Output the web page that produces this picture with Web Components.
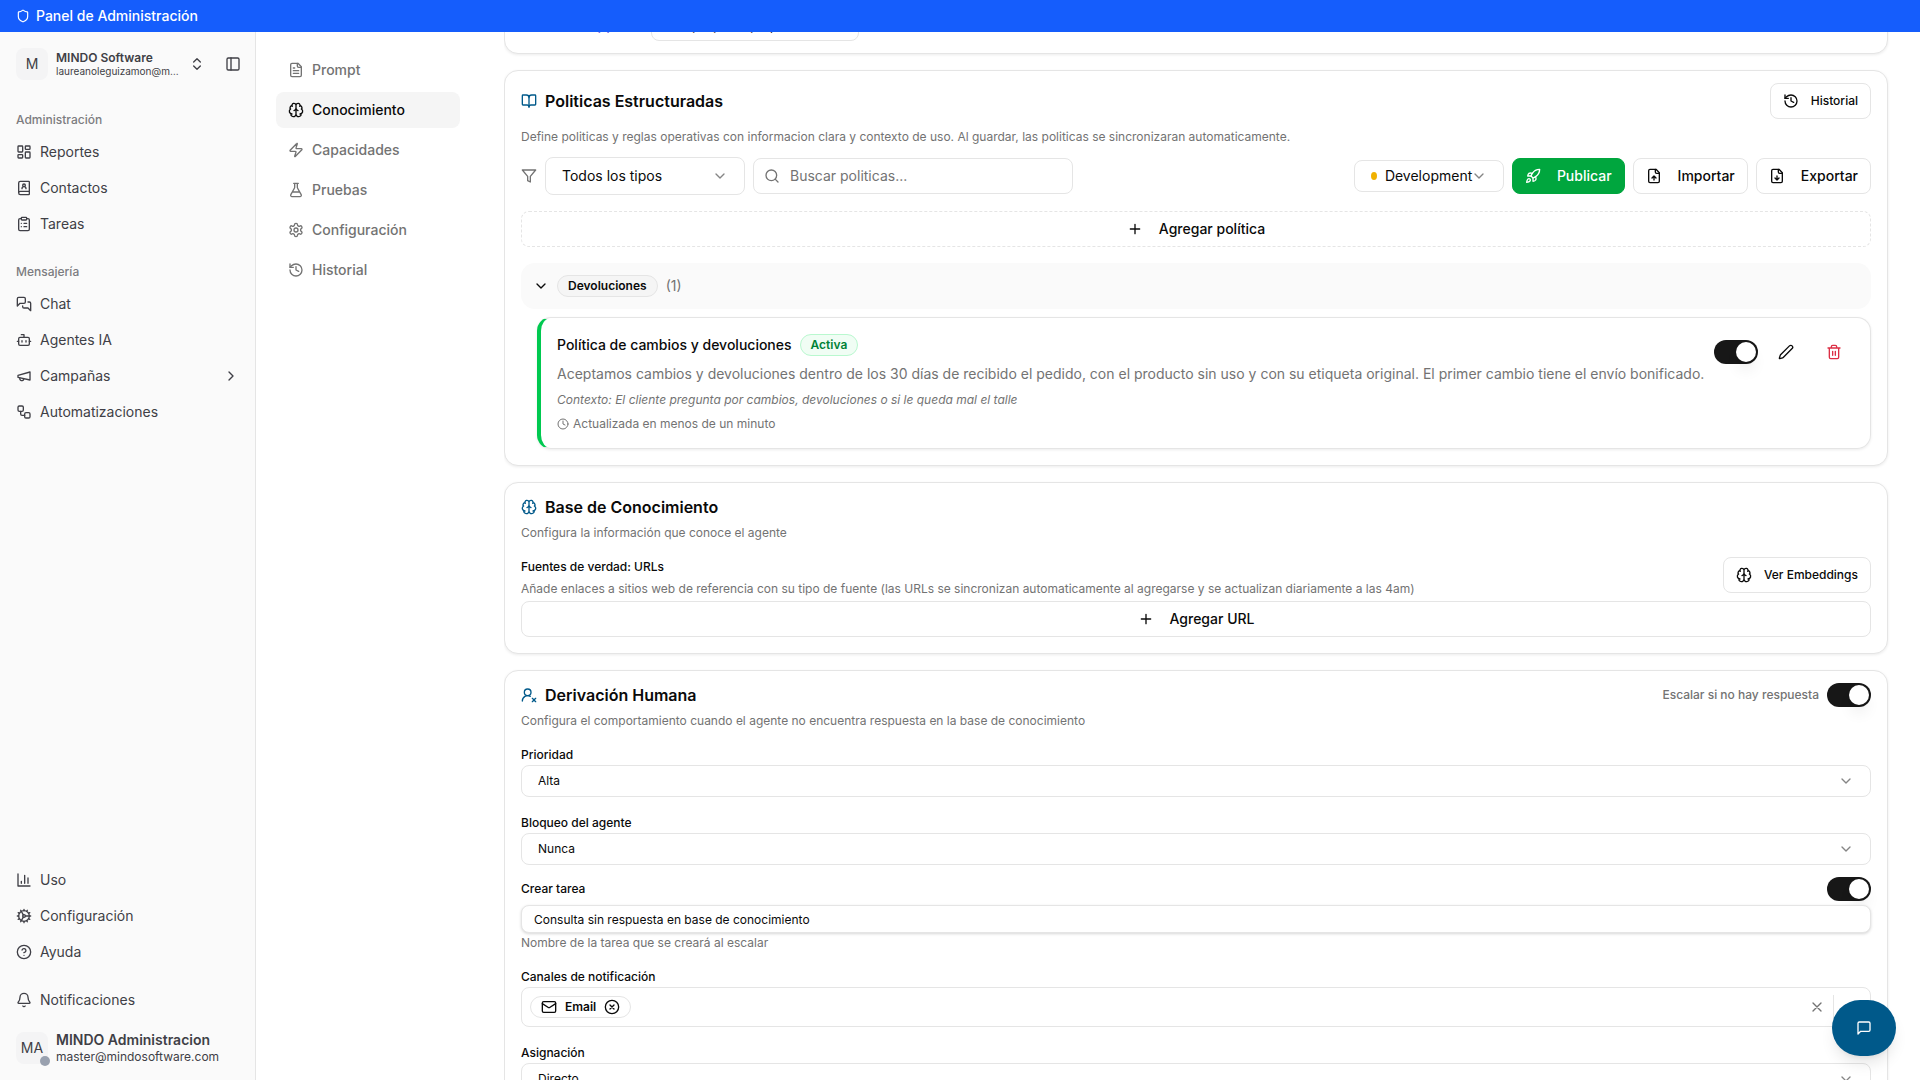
<!DOCTYPE html>
<html lang="es">
<head>
<meta charset="utf-8">
<meta name="viewport" content="width=device-width, initial-scale=1">
<title>Panel de Administración</title>
<style>
    :root {
        --blue: #155dfc;
        --brand: #00598a;
        --green: #00a63e;
        --text: #0a0a0a;
        --muted: #737373;
        --border: #e5e5e5;
        --side-text: #3f3f46;
    }
    body {
        margin: 0;
        font-family: Inter, "Liberation Sans", sans-serif;
        font-size: 14px;
        line-height: 20px;
        color: var(--text);
        background: #fff;
    }
</style>
</head>
<body>
<admin-app></admin-app>

<script>
// Icon shapes on a 24px grid
const icons = {
    'shield': '<path d="M20 13c0 5-3.5 7.5-7.66 8.95a1 1 0 0 1-.67-.01C7.5 20.5 4 18 4 13V6a1 1 0 0 1 1-1c2 0 4.5-1.2 6.24-2.72a1.17 1.17 0 0 1 1.52 0C14.51 3.81 17 5 19 5a1 1 0 0 1 1 1z"/>',
    'chevrons': '<path d="m7 15 5 5 5-5M7 9l5-5 5 5"/>',
    'chevron-down': '<path d="m6 9 6 6 6-6"/>',
    'chevron-right': '<path d="m9 18 6-6-6-6"/>',
    'panel-left': '<rect width="18" height="18" x="3" y="3" rx="2"/><path d="M9 3v18"/>',
    'dashboard': '<rect width="7" height="9" x="3" y="3" rx="1"/><rect width="7" height="5" x="14" y="3" rx="1"/><rect width="7" height="9" x="14" y="12" rx="1"/><rect width="7" height="5" x="3" y="16" rx="1"/>',
    'grid': '<rect width="7" height="7" x="3" y="3" rx="1"/><rect width="7" height="7" x="14" y="3" rx="1"/><rect width="7" height="7" x="14" y="14" rx="1"/><rect width="7" height="7" x="3" y="14" rx="1"/>',
    'book-user': '<path d="M15 13a3 3 0 1 0-6 0"/><path d="M4 19.5v-15A2.5 2.5 0 0 1 6.5 2H19a1 1 0 0 1 1 1v18a1 1 0 0 1-1 1H6.5a1 1 0 0 1 0-5H20"/><circle cx="12" cy="8" r="2"/>',
    'clipboard': '<rect width="8" height="4" x="8" y="2" rx="1"/><path d="M16 4h2a2 2 0 0 1 2 2v14a2 2 0 0 1-2 2H6a2 2 0 0 1-2-2V6a2 2 0 0 1 2-2h2M12 11h4M12 16h4M8 11h.01M8 16h.01"/>',
    'messages': '<path d="M14 9a2 2 0 0 1-2 2H6l-4 4V4a2 2 0 0 1 2-2h8a2 2 0 0 1 2 2z"/><path d="M18 9h2a2 2 0 0 1 2 2v11l-4-4h-6a2 2 0 0 1-2-2v-1"/>',
    'bot': '<path d="M12 8V4H8"/><rect width="16" height="12" x="4" y="8" rx="2"/><path d="M2 14h2M20 14h2M15 13v2M9 13v2"/>',
    'megaphone': '<path d="m3 11 18-5v12L3 14v-3z"/><path d="M11.6 16.8a3 3 0 1 1-5.8-1.6"/>',
    'workflow': '<rect width="8" height="8" x="3" y="3" rx="2"/><path d="M7 11v4a2 2 0 0 0 2 2h4"/><rect width="8" height="8" x="13" y="13" rx="2"/>',
    'chart': '<path d="M3 3v18h18M18 17V9M13 17V5M8 17v-3"/>',
    'cog': '<path d="M12 20a8 8 0 1 0 0-16 8 8 0 0 0 0 16Z"/><path d="M12 14a2 2 0 1 0 0-4 2 2 0 0 0 0 4Z"/><path d="M12 2v2M12 22v-2M17 20.66l-1-1.73M11 10.27 7 3.34M20.66 17l-1.73-1M3.34 7l1.73 1M14 12h8M2 12h2M20.66 7l-1.73 1M3.34 17l1.73-1M17 3.34l-1 1.73M11 13.73l-4 6.93"/>',
    'help': '<circle cx="12" cy="12" r="10"/><path d="M9.09 9a3 3 0 0 1 5.83 1c0 2-3 3-3 3M12 17h.01"/>',
    'bell': '<path d="M10.268 21a2 2 0 0 0 3.464 0"/><path d="M3.262 15.326A1 1 0 0 0 4 17h16a1 1 0 0 0 .74-1.673C19.41 13.956 18 12.499 18 8A6 6 0 0 0 6 8c0 4.499-1.411 5.956-2.738 7.326"/>',
    'file-text': '<path d="M15 2H6a2 2 0 0 0-2 2v16a2 2 0 0 0 2 2h12a2 2 0 0 0 2-2V7Z"/><path d="M14 2v4a2 2 0 0 0 2 2h4M10 9H8M16 13H8M16 17H8"/>',
    'brain': '<path d="M12 18V5M15 13a4.17 4.17 0 0 1-3-4 4.17 4.17 0 0 1-3 4M17.598 6.5A3 3 0 1 0 12 5a3 3 0 1 0-5.598 1.5M17.997 5.125a4 4 0 0 1 2.526 5.77M18 18a4 4 0 0 0 2-7.464M19.967 17.483A4 4 0 1 1 12 18a4 4 0 1 1-7.967-.517M6 18a4 4 0 0 1-2-7.464M6.003 5.125a4 4 0 0 0-2.526 5.77"/>',
    'zap': '<path d="M4 14a1 1 0 0 1-.78-1.63l9.9-10.2a.5.5 0 0 1 .86.46l-1.92 6.02A1 1 0 0 0 13 10h7a1 1 0 0 1 .78 1.63l-9.9 10.2a.5.5 0 0 1-.86-.46l1.92-6.02A1 1 0 0 0 11 14z"/>',
    'flask': '<path d="M14 2v6a2 2 0 0 0 .245.96l5.51 10.08A2 2 0 0 1 18 22H6a2 2 0 0 1-1.755-2.96l5.51-10.08A2 2 0 0 0 10 8V2M6.453 15h11.094M8.5 2h7"/>',
    'settings': '<path d="M12.22 2h-.44a2 2 0 0 0-2 2v.18a2 2 0 0 1-1 1.73l-.43.25a2 2 0 0 1-2 0l-.15-.08a2 2 0 0 0-2.73.73l-.22.38a2 2 0 0 0 .73 2.73l.15.1a2 2 0 0 1 1 1.72v.51a2 2 0 0 1-1 1.74l-.15.09a2 2 0 0 0-.73 2.73l.22.38a2 2 0 0 0 2.73.73l.15-.08a2 2 0 0 1 2 0l.43.25a2 2 0 0 1 1 1.73V20a2 2 0 0 0 2 2h.44a2 2 0 0 0 2-2v-.18a2 2 0 0 1 1-1.73l.43-.25a2 2 0 0 1 2 0l.15.08a2 2 0 0 0 2.73-.73l.22-.39a2 2 0 0 0-.73-2.73l-.15-.08a2 2 0 0 1-1-1.74v-.5a2 2 0 0 1 1-1.74l.15-.09a2 2 0 0 0 .73-2.73l-.22-.38a2 2 0 0 0-2.73-.73l-.15.08a2 2 0 0 1-2 0l-.43-.25a2 2 0 0 1-1-1.73V4a2 2 0 0 0-2-2z"/><circle cx="12" cy="12" r="3"/>',
    'history': '<path d="M3 12a9 9 0 1 0 9-9 9.75 9.75 0 0 0-6.74 2.74L3 8"/><path d="M3 3v5h5M12 7v5l4 2"/>',
    'book-open': '<path d="M12 7v14"/><path d="M3 18a1 1 0 0 1-1-1V4a1 1 0 0 1 1-1h5a4 4 0 0 1 4 4 4 4 0 0 1 4-4h5a1 1 0 0 1 1 1v13a1 1 0 0 1-1 1h-6a3 3 0 0 0-3 3 3 3 0 0 0-3-3z"/>',
    'filter': '<path d="M22 3H2l8 9.46V19l4 2v-8.54z"/>',
    'search': '<circle cx="11" cy="11" r="8"/><path d="m21 21-4.3-4.3"/>',
    'rocket': '<path d="M4.5 16.5c-1.5 1.26-2 5-2 5s3.74-.5 5-2c.71-.84.7-2.13-.09-2.91a2.18 2.18 0 0 0-2.91-.09z"/><path d="m12 15-3-3a22 22 0 0 1 2-3.95A12.88 12.88 0 0 1 22 2c0 2.72-.78 7.5-6 11a22.35 22.35 0 0 1-4 2z"/><path d="M9 12H4s.55-3.03 2-4c1.62-1.08 5 0 5 0M12 15v5s3.03-.55 4-2c1.08-1.62 0-5 0-5"/>',
    'file-up': '<path d="M15 2H6a2 2 0 0 0-2 2v16a2 2 0 0 0 2 2h12a2 2 0 0 0 2-2V7Z"/><path d="M14 2v4a2 2 0 0 0 2 2h4M12 12v6M15 15l-3-3-3 3"/>',
    'file-down': '<path d="M15 2H6a2 2 0 0 0-2 2v16a2 2 0 0 0 2 2h12a2 2 0 0 0 2-2V7Z"/><path d="M14 2v4a2 2 0 0 0 2 2h4M12 18v-6M9 15l3 3 3-3"/>',
    'pencil': '<path d="M21.174 6.812a1 1 0 0 0-3.986-3.987L3.842 16.174a2 2 0 0 0-.5.83l-1.321 4.352a.5.5 0 0 0 .623.622l4.353-1.32a2 2 0 0 0 .83-.497z"/>',
    'trash': '<path d="M3 6h18M19 6v14c0 1-1 2-2 2H7c-1 0-2-1-2-2V6M8 6V4c0-1 1-2 2-2h4c1 0 2 1 2 2v2M10 11v6M14 11v6"/>',
    'user-x': '<path d="M2 21a8 8 0 0 1 11.873-7"/><circle cx="10" cy="8" r="5"/><path d="m17 17 5 5M22 17l-5 5"/>',
    'mail': '<rect width="20" height="16" x="2" y="4" rx="2"/><path d="m22 7-8.97 5.7a1.94 1.94 0 0 1-2.06 0L2 7"/>',
    'circle-x': '<circle cx="12" cy="12" r="10"/><path d="m15 9-6 6M9 9l6 6"/>',
    'x': '<path d="M18 6 6 18M6 6l12 12"/>',
    'plus': '<path d="M5 12h14M12 5v14"/>',
    'clock': '<circle cx="12" cy="12" r="10"/><path d="M12 6v6l4 2"/>',
    'message': '<path d="M21 15a2 2 0 0 1-2 2H7l-4 4V5a2 2 0 0 1 2-2h14a2 2 0 0 1 2 2z"/>'
};

class UiIcon extends HTMLElement {
    constructor() {
        super();
        this.attachShadow({ mode: 'open' });
    }

    connectedCallback() {
        this.shadowRoot.innerHTML = `
            <style>
                :host {
                    display: block;
                    flex: none;
                    width: 16px;
                    height: 16px;
                }
                svg {
                    display: block;
                    width: 100%;
                    height: 100%;
                    fill: none;
                    stroke: currentColor;
                    stroke-width: 2;
                    stroke-linecap: round;
                    stroke-linejoin: round;
                }
            </style>
            <svg viewBox="0 0 24 24" aria-hidden="true">${icons[this.getAttribute('name')]}</svg>
        `;
    }
}

class UiButton extends HTMLElement {
    constructor() {
        super();
        this.attachShadow({ mode: 'open' });
    }

    connectedCallback() {
        this.shadowRoot.innerHTML = `
            <style>
                :host {
                    display: block;
                }
                button {
                    display: flex;
                    align-items: center;
                    justify-content: center;
                    gap: 16px;
                    width: 100%;
                    height: 36px;
                    padding: 0 12px;
                    border: 1px solid var(--border);
                    border-radius: 8px;
                    background: #fff;
                    color: var(--text);
                    font: 500 14px/20px Inter, "Liberation Sans", sans-serif;
                    white-space: nowrap;
                    cursor: pointer;
                }
                :host([size="sm"]) button {
                    gap: 12px;
                    font-size: 12px;
                }
                :host([variant="dashed"]) button {
                    border-style: dashed;
                }
                :host([variant="primary"]) button {
                    background: var(--green);
                    border-color: var(--green);
                    color: #fff;
                }
            </style>
            <button type="button"><ui-icon name="${this.getAttribute('icon')}"></ui-icon><slot></slot></button>
        `;
    }
}

class UiSwitch extends HTMLElement {
    constructor() {
        super();
        this.attachShadow({ mode: 'open' });
    }

    connectedCallback() {
        this.shadowRoot.innerHTML = `
            <style>
                :host {
                    display: block;
                }
                label {
                    display: flex;
                    align-items: center;
                    justify-content: space-between;
                    gap: 8px;
                    font-size: 12px;
                    font-weight: 500;
                }
                :host([muted]) label {
                    color: var(--muted);
                }
                input {
                    appearance: none;
                    display: flex;
                    align-items: center;
                    justify-content: flex-end;
                    box-sizing: border-box;
                    width: 44px;
                    height: 24px;
                    margin: 0;
                    padding: 2px;
                    border-radius: 12px;
                    background: #171717;
                    cursor: pointer;
                }
                input::before {
                    content: "";
                    width: 20px;
                    height: 20px;
                    border-radius: 50%;
                    background: #fff;
                    box-shadow: 0 10px 15px -3px rgba(0,0,0,0.1), 0 4px 6px -4px rgba(0,0,0,0.1);
                }
                input:not(:checked) {
                    justify-content: flex-start;
                    background: var(--border);
                }
            </style>
            <label><slot></slot><input type="checkbox" role="switch" checked aria-label="${this.getAttribute('label') || this.textContent}"></label>
        `;
    }
}

class UiSelect extends HTMLElement {
    constructor() {
        super();
        this.attachShadow({ mode: 'open' });
    }

    connectedCallback() {
        const label = this.getAttribute('label');
        const dot = this.hasAttribute('dot') ? '<span class="dot"></span>' : '';

        this.shadowRoot.innerHTML = `
            <style>
                :host {
                    display: block;
                    --height: 32px;
                    --size: 12px;
                }
                label {
                    display: block;
                    font-size: 12px;
                    font-weight: 500;
                }
                .box {
                    display: grid;
                    grid-template-columns: 16px auto 1fr auto 16px;
                    align-items: center;
                    box-sizing: border-box;
                    height: var(--height);
                    border: 1px solid var(--border);
                    border-radius: 8px;
                }
                select {
                    appearance: none;
                    grid-column: 1 / -1;
                    grid-row: 1;
                    width: 100%;
                    height: 100%;
                    padding: 0 16px;
                    border: 0;
                    background: transparent;
                    color: var(--text);
                    font: 400 var(--size)/20px Inter, "Liberation Sans", sans-serif;
                }
                .dot {
                    grid-column: 2;
                    grid-row: 1;
                    width: 6px;
                    height: 8px;
                    border-radius: 50%;
                    background: #f0b100;
                }
                .dot ~ select {
                    padding-left: 30px;
                }
                ui-icon {
                    grid-column: 4;
                    grid-row: 1;
                    color: #858585;
                    pointer-events: none;
                }
            </style>
            ${label ? `<label for="field">${label}</label>` : ''}
            <div class="box">
                ${dot}
                <select id="field" aria-label="${label || this.getAttribute('value')}"><option>${this.getAttribute('value')}</option></select>
                <ui-icon name="chevron-down"></ui-icon>
            </div>
        `;
    }
}

class UiBadge extends HTMLElement {
    constructor() {
        super();
        this.attachShadow({ mode: 'open' });
        this.shadowRoot.innerHTML = `
            <style>
                :host {
                    display: flex;
                    align-items: center;
                    gap: 8px;
                    box-sizing: border-box;
                    height: 22px;
                    padding: 0 10px;
                    border: 1px solid var(--border);
                    border-radius: 11px;
                    background: #f5f5f5;
                    font-size: 12px;
                    font-weight: 600;
                    line-height: 16px;
                }
                :host([tone="active"]) {
                    color: #008236;
                    background: #f0fdf4;
                    border-color: #b9f8cf;
                }
                :host([tone="plain"]) {
                    background: #fff;
                }
            </style>
            <slot></slot>
        `;
    }
}

class UiCard extends HTMLElement {
    constructor() {
        super();
        this.attachShadow({ mode: 'open' });
    }

    connectedCallback() {
        const heading = this.getAttribute('heading');

        this.shadowRoot.innerHTML = `
            <style>
                :host {
                    display: block;
                    padding: 12px 16px 16px;
                    border: 1px solid var(--border);
                    border-radius: 14px;
                    background: #fff;
                    box-shadow: 0 1px 3px rgba(0,0,0,0.08);
                }
                :host([compact]) {
                    padding-bottom: 12px;
                }
                header {
                    display: flex;
                    align-items: center;
                    justify-content: space-between;
                }
                h2 {
                    display: flex;
                    align-items: center;
                    gap: 8px;
                    margin: 0;
                    font-size: 16px;
                    font-weight: 600;
                    line-height: 24px;
                }
                h2 ui-icon {
                    color: var(--brand);
                }
                p {
                    margin: 6px 0 0;
                    color: var(--muted);
                    font-size: 12px;
                    line-height: 16px;
                }
                :host([roomy]) p {
                    margin-top: 10px;
                }
            </style>
            ${heading ? `
                <header>
                    <h2><ui-icon name="${this.getAttribute('icon')}"></ui-icon>${heading}</h2>
                    <slot name="action"></slot>
                </header>
                <p>${this.getAttribute('description')}</p>
            ` : ''}
            <slot></slot>
        `;
    }
}

class AppSidebar extends HTMLElement {
    constructor() {
        super();
        this.attachShadow({ mode: 'open' });
    }

    connectedCallback() {
        const link = ([icon, text, more]) => `
            <a href="#"><ui-icon name="${icon}"></ui-icon><span>${text}</span>${more ? '<ui-icon name="chevron-right"></ui-icon>' : ''}</a>
        `;
        const admin = [['dashboard', 'Reportes'], ['book-user', 'Contactos'], ['clipboard', 'Tareas']];
        const messaging = [['messages', 'Chat'], ['bot', 'Agentes IA'], ['megaphone', 'Campañas', true], ['workflow', 'Automatizaciones']];
        const support = [['chart', 'Uso'], ['cog', 'Configuración'], ['help', 'Ayuda']];

        this.shadowRoot.innerHTML = `
            <style>
                :host {
                    display: flex;
                    flex-direction: column;
                    gap: 16px;
                    flex: none;
                    box-sizing: border-box;
                    width: 256px;
                    padding: 8px;
                    border-right: 1px solid var(--border);
                    background: #fafafa;
                    color: var(--side-text);
                }
                .team, .user {
                    display: flex;
                    align-items: center;
                    gap: 8px;
                    height: 48px;
                    padding: 0 8px;
                }
                .team {
                    gap: 20px;
                    padding-right: 6px;
                }
                .switcher {
                    display: flex;
                    align-items: center;
                    gap: 8px;
                    flex: 1;
                    min-width: 0;
                }
                button {
                    padding: 0;
                    border: 0;
                    background: none;
                    color: inherit;
                    font: inherit;
                    text-align: left;
                    cursor: pointer;
                }
                .avatar {
                    display: grid;
                    place-items: center;
                    position: relative;
                    flex: none;
                    width: 32px;
                    height: 32px;
                    border-radius: 8px;
                    background: #f4f4f5;
                }
                .status {
                    position: absolute;
                    right: -2px;
                    bottom: -2px;
                    width: 10px;
                    height: 10px;
                    border-radius: 50%;
                    background: #99a1af;
                }
                .names {
                    display: grid;
                    flex: 1;
                    min-width: 0;
                }
                .names > * {
                    overflow: hidden;
                    text-overflow: ellipsis;
                    white-space: nowrap;
                }
                .team strong {
                    font-size: 12px;
                    font-weight: 600;
                    line-height: 15px;
                }
                .team small {
                    font-size: 10px;
                    line-height: 13px;
                }
                .user strong {
                    font-weight: 600;
                    line-height: 18px;
                }
                .user small {
                    font-size: 12px;
                    line-height: 16px;
                }
                nav {
                    display: grid;
                    gap: 4px;
                }
                h3 {
                    margin: 0 0 -4px;
                    padding: 0 8px;
                    color: #7c7c80;
                    font-size: 12px;
                    font-weight: 500;
                    line-height: 32px;
                }
                a {
                    display: flex;
                    align-items: center;
                    gap: 8px;
                    height: 32px;
                    padding: 0 8px;
                    color: inherit;
                    text-decoration: none;
                }
                a span {
                    flex: 1;
                }
                .top {
                    margin-bottom: auto;
                    display: grid;
                    gap: 16px;
                }
                .bottom {
                    display: grid;
                    gap: 8px;
                }
            </style>
            <div class="team">
                <button type="button" class="switcher">
                    <span class="avatar">M</span>
                    <span class="names"><strong>MINDO Software</strong><small>laureanoleguizamon@mindosoftware.com</small></span>
                    <ui-icon name="chevrons"></ui-icon>
                </button>
                <button type="button" aria-label="Contraer menú"><ui-icon name="panel-left"></ui-icon></button>
            </div>
            <div class="top">
                <nav><h3>Administración</h3>${admin.map(link).join('')}</nav>
                <nav><h3>Mensajería</h3>${messaging.map(link).join('')}</nav>
            </div>
            <nav>${support.map(link).join('')}</nav>
            <div class="bottom">
                ${link(['bell', 'Notificaciones'])}
                <div class="user">
                    <span class="avatar">MA<span class="status"></span></span>
                    <span class="names"><strong>MINDO Administracion</strong><small>master@mindosoftware.com</small></span>
                </div>
            </div>
        `;
    }
}

class AgentNav extends HTMLElement {
    constructor() {
        super();
        this.attachShadow({ mode: 'open' });
    }

    connectedCallback() {
        const items = [
            ['file-text', 'Prompt'],
            ['brain', 'Conocimiento'],
            ['zap', 'Capacidades'],
            ['flask', 'Pruebas'],
            ['settings', 'Configuración'],
            ['history', 'Historial']
        ];

        this.shadowRoot.innerHTML = `
            <style>
                :host {
                    display: block;
                    flex: none;
                    width: 184px;
                    padding: 20px 44px 0 20px;
                }
                nav {
                    display: grid;
                    gap: 4px;
                }
                a {
                    display: flex;
                    align-items: center;
                    gap: 8px;
                    height: 36px;
                    padding: 0 12px;
                    border-radius: 8px;
                    color: var(--muted);
                    font-weight: 500;
                    text-decoration: none;
                }
                a.active {
                    background: #f5f5f5;
                    color: var(--text);
                }
            </style>
            <nav>
                ${items.map(([icon, text]) => `<a href="#"${text === 'Conocimiento' ? ' class="active"' : ''}><ui-icon name="${icon}"></ui-icon>${text}</a>`).join('')}
            </nav>
        `;
    }
}

class PolicyItem extends HTMLElement {
    constructor() {
        super();
        this.attachShadow({ mode: 'open' });
        this.shadowRoot.innerHTML = `
            <style>
                :host {
                    display: flex;
                    align-items: flex-start;
                    gap: 8px;
                    margin-left: 16px;
                    padding: 16px;
                    border: 1px solid var(--border);
                    border-left: 4px solid #00c950;
                    border-radius: 14px;
                    box-shadow: 0 1px 3px rgba(0,0,0,0.08);
                }
                .body {
                    display: grid;
                    gap: 8px;
                    flex: 1;
                    min-width: 0;
                    color: var(--muted);
                    font-size: 12px;
                    line-height: 16px;
                }
                .title {
                    display: flex;
                    align-items: center;
                    gap: 8px;
                }
                h4, p {
                    margin: 0;
                }
                h4 {
                    color: var(--text);
                    font-size: 14px;
                    font-weight: 500;
                    line-height: 20px;
                }
                .text {
                    font-size: 14px;
                    line-height: 20px;
                }
                .updated {
                    display: flex;
                    align-items: center;
                    gap: 4px;
                }
                .updated ui-icon {
                    width: 12px;
                    height: 12px;
                }
                .actions {
                    display: flex;
                    align-items: center;
                    gap: 8px;
                }
                button {
                    display: grid;
                    place-items: center;
                    width: 40px;
                    height: 36px;
                    padding: 0;
                    border: 0;
                    background: none;
                    color: var(--text);
                    cursor: pointer;
                }
                .delete {
                    color: #dc2f45;
                }
            </style>
            <div class="body">
                <div class="title"><h4><slot name="title"></slot></h4><ui-badge tone="active">Activa</ui-badge></div>
                <p class="text"><slot></slot></p>
                <p><i><slot name="context"></slot></i></p>
                <div class="updated"><ui-icon name="clock"></ui-icon><slot name="updated"></slot></div>
            </div>
            <div class="actions">
                <ui-switch label="Política activa"></ui-switch>
                <button type="button" aria-label="Editar"><ui-icon name="pencil"></ui-icon></button>
                <button type="button" class="delete" aria-label="Eliminar"><ui-icon name="trash"></ui-icon></button>
            </div>
        `;
    }
}

class KnowledgePage extends HTMLElement {
    constructor() {
        super();
        this.attachShadow({ mode: 'open' });
    }

    connectedCallback() {
        this.shadowRoot.innerHTML = `
            <style>
                :host {
                    display: flex;
                    flex-direction: column;
                    gap: 16px;
                    flex: 1;
                    min-width: 0;
                    padding: 20px 32px 20px 0;
                    overflow: auto;
                    scrollbar-width: none;
                }
                .channel, .toolbar {
                    display: flex;
                    align-items: center;
                    gap: 8px;
                }
                .channel ui-icon {
                    color: #4f46e5;
                }
                .channel span {
                    width: 98px;
                    color: #4f46e5;
                    font-weight: 500;
                }
                .channel ui-select {
                    width: 208px;
                    --size: 14px;
                }
                .toolbar {
                    margin: 12px 0 16px;
                    color: var(--muted);
                }
                .type {
                    width: 200px;
                    --height: 38px;
                    --size: 14px;
                }
                .env {
                    width: 150px;
                    margin-left: auto;
                    --size: 14px;
                }
                .search {
                    display: flex;
                    align-items: center;
                    gap: 10px;
                    box-sizing: border-box;
                    width: 320px;
                    height: 36px;
                    padding: 0 10px;
                    border: 1px solid var(--border);
                    border-radius: 8px;
                }
                input {
                    flex: 1;
                    min-width: 0;
                    padding: 0;
                    border: 0;
                    outline: 0;
                    color: var(--text);
                    font: 400 14px/20px Inter, "Liberation Sans", sans-serif;
                }
                input::placeholder {
                    color: var(--muted);
                }
                .group {
                    display: flex;
                    align-items: center;
                    gap: 8px;
                    box-sizing: border-box;
                    width: 100%;
                    height: 46px;
                    margin: 16px 0 8px;
                    padding: 0 12px;
                    border: 0;
                    border-radius: 14px;
                    background: #fafafa;
                    color: var(--text);
                    font: 400 14px/20px Inter, "Liberation Sans", sans-serif;
                }
                .group .count {
                    color: var(--muted);
                }
                .sources {
                    display: flex;
                    align-items: flex-start;
                    justify-content: space-between;
                    margin: 16px 0 4px;
                }
                h3, p {
                    margin: 0;
                    font-size: 12px;
                    font-weight: 500;
                }
                p {
                    color: var(--muted);
                    font-weight: 400;
                }
                .sources p {
                    margin-top: 4px;
                    line-height: 16px;
                }
                .fields {
                    display: grid;
                    gap: 16px;
                    margin-top: 16px;
                }
                .task {
                    display: grid;
                    margin: -4px 0 -2px;
                }
                .task input {
                    height: 28px;
                    box-sizing: border-box;
                    margin-top: 4px;
                    padding: 0 12px;
                    border: 1px solid var(--border);
                    border-radius: 8px;
                    box-shadow: 0 1px 3px rgba(0,0,0,0.16);
                    font-size: 12px;
                }
                .tags {
                    display: flex;
                    align-items: center;
                    box-sizing: border-box;
                    height: 40px;
                    padding: 0 8px;
                    border: 1px solid var(--border);
                    border-radius: 8px;
                }
                .tags button {
                    padding: 0;
                    border: 0;
                    background: none;
                    color: inherit;
                }
                .tags .clear {
                    margin-left: auto;
                    padding-right: 8px;
                    color: var(--muted);
                }
                .tags .more {
                    height: 24px;
                    padding: 0 4px 0 8px;
                    border-left: 1px solid var(--border);
                    color: var(--muted);
                }
            </style>

            <ui-card compact>
                <div class="channel">
                    <ui-icon name="grid"></ui-icon><span>WhatsApp</span>
                    <ui-select value="Grupo principal, todos"></ui-select>
                </div>
            </ui-card>

            <ui-card roomy icon="book-open" heading="Politicas Estructuradas"
                description="Define politicas y reglas operativas con informacion clara y contexto de uso. Al guardar, las politicas se sincronizaran automaticamente.">
                <ui-button slot="action" size="sm" icon="history">Historial</ui-button>
                <div class="toolbar">
                    <ui-icon name="filter"></ui-icon>
                    <ui-select class="type" value="Todos los tipos"></ui-select>
                    <label class="search"><ui-icon name="search"></ui-icon><input type="text" placeholder="Buscar politicas..." aria-label="Buscar politicas"></label>
                    <ui-select class="env" dot value="Development"></ui-select>
                    <ui-button variant="primary" icon="rocket">Publicar</ui-button>
                    <ui-button icon="file-up">Importar</ui-button>
                    <ui-button icon="file-down">Exportar</ui-button>
                </div>
                <ui-button variant="dashed" icon="plus">Agregar política</ui-button>
                <button type="button" class="group" aria-expanded="true">
                    <ui-icon name="chevron-down"></ui-icon><ui-badge>Devoluciones</ui-badge><span class="count">(1)</span>
                </button>
                <policy-item>
                    <span slot="title">Política de cambios y devoluciones</span>
                    Aceptamos cambios y devoluciones dentro de los 30 días de recibido el pedido, con el producto sin uso y con su etiqueta original. El primer cambio tiene el envío bonificado.
                    <span slot="context">Contexto: El cliente pregunta por cambios, devoluciones o si le queda mal el talle</span>
                    <span slot="updated">Actualizada en menos de un minuto</span>
                </policy-item>
            </ui-card>

            <ui-card icon="brain" heading="Base de Conocimiento" description="Configura la información que conoce el agente">
                <div class="sources">
                    <div>
                        <h3>Fuentes de verdad: URLs</h3>
                        <p>Añade enlaces a sitios web de referencia con su tipo de fuente (las URLs se sincronizan automaticamente al agregarse y se actualizan diariamente a las 4am)</p>
                    </div>
                    <ui-button size="sm" icon="brain">Ver Embeddings</ui-button>
                </div>
                <ui-button icon="plus">Agregar URL</ui-button>
            </ui-card>

            <ui-card icon="user-x" heading="Derivación Humana"
                description="Configura el comportamiento cuando el agente no encuentra respuesta en la base de conocimiento">
                <ui-switch slot="action" muted>Escalar si no hay respuesta</ui-switch>
                <div class="fields">
                    <ui-select label="Prioridad" value="Alta"></ui-select>
                    <ui-select label="Bloqueo del agente" value="Nunca"></ui-select>
                    <div class="task">
                        <ui-switch>Crear tarea</ui-switch>
                        <input type="text" value="Consulta sin respuesta en base de conocimiento" aria-label="Nombre de la tarea">
                        <p>Nombre de la tarea que se creará al escalar</p>
                    </div>
                    <div>
                        <h3>Canales de notificación</h3>
                        <div class="tags">
                            <ui-badge tone="plain"><ui-icon name="mail"></ui-icon>Email<button type="button" aria-label="Quitar Email"><ui-icon name="circle-x"></ui-icon></button></ui-badge>
                            <button type="button" class="clear" aria-label="Limpiar"><ui-icon name="x"></ui-icon></button>
                            <button type="button" class="more" aria-label="Abrir"><ui-icon name="chevron-down"></ui-icon></button>
                        </div>
                    </div>
                    <ui-select label="Asignación" value="Directo"></ui-select>
                </div>
            </ui-card>
        `;

        // Open on the policies section, just past the channel card
        this.scrollTop = 56;
    }
}

class AdminApp extends HTMLElement {
    constructor() {
        super();
        this.attachShadow({ mode: 'open' });
    }

    connectedCallback() {
        this.shadowRoot.innerHTML = `
            <style>
                :host {
                    display: flex;
                    flex-direction: column;
                    height: 100vh;
                }
                .topbar {
                    display: flex;
                    align-items: center;
                    gap: 6px;
                    flex: none;
                    height: 32px;
                    padding: 0 16px;
                    background: var(--blue);
                    color: #fff;
                    font-weight: 500;
                }
                .topbar ui-icon {
                    width: 14px;
                    height: 14px;
                }
                .layout {
                    display: flex;
                    flex: 1;
                    min-height: 0;
                }
                .chat {
                    position: fixed;
                    right: 24px;
                    bottom: 24px;
                    display: grid;
                    place-items: center;
                    width: 64px;
                    height: 56px;
                    padding: 0;
                    border: 0;
                    border-radius: 28px;
                    background: var(--brand);
                    color: #fff;
                    box-shadow: 0 10px 15px -3px rgba(0,0,0,0.1), 0 4px 6px -4px rgba(0,0,0,0.1);
                    cursor: pointer;
                }
            </style>
            <div class="topbar"><ui-icon name="shield"></ui-icon>Panel de Administración</div>
            <div class="layout">
                <app-sidebar></app-sidebar>
                <agent-nav></agent-nav>
                <knowledge-page></knowledge-page>
            </div>
            <button type="button" class="chat" aria-label="Abrir chat"><ui-icon name="message"></ui-icon></button>
        `;
    }
}

customElements.define('ui-icon', UiIcon);
customElements.define('ui-button', UiButton);
customElements.define('ui-switch', UiSwitch);
customElements.define('ui-select', UiSelect);
customElements.define('ui-badge', UiBadge);
customElements.define('ui-card', UiCard);
customElements.define('policy-item', PolicyItem);
customElements.define('app-sidebar', AppSidebar);
customElements.define('agent-nav', AgentNav);
customElements.define('knowledge-page', KnowledgePage);
customElements.define('admin-app', AdminApp);
</script>
</body>
</html>
